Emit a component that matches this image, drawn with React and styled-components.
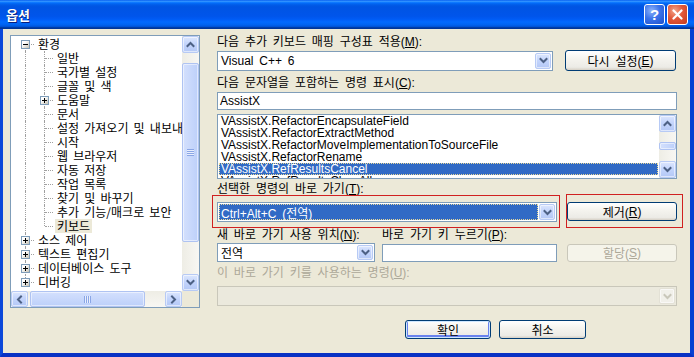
import React from 'react'
import styled, { createGlobalStyle } from 'styled-components'

const GlobalStyle = createGlobalStyle`
  html, body { margin:0; padding:0; background:#fff; }
  body { font-family:"Liberation Sans","Noto Sans CJK KR",sans-serif; font-size:12px; color:#000; word-spacing:2.5px; }
`

const Window = styled.div`
  width:694px;
  height:357px;
  display:flex;
  flex-direction:column;
  overflow:hidden;
`
const TitleBar = styled.div`
  height:29px;
  flex:none;
  box-sizing:border-box;
  display:flex;
  align-items:center;
  justify-content:space-between;
  padding:0 6px 0 6px;
  background:linear-gradient(to bottom,#0058EE 0%,#3593FF 4%,#288EFF 6%,#127DFF 8%,#036FFC 10%,#0262EE 14%,#0057E5 20%,#0054E3 24%,#0055EB 56%,#005BF5 66%,#026AFE 76%,#0062EF 86%,#0052D6 92%,#0040AB 94%,#003092 100%);
`
const Title = styled.div`
  color:#fff;
  font-family:"Noto Sans CJK KR",sans-serif;
  font-weight:bold;
  font-size:13px;
  text-shadow:1px 1px 0 #0A1E7C;
`
const CapButtons = styled.div`
  display:flex;
  gap:2px;
  margin-top:-1px;
`
const CapButton = styled.div`
  width:21px;
  height:21px;
  box-sizing:border-box;
  border:1px solid #fff;
  border-radius:3px;
  display:flex;
  align-items:center;
  justify-content:center;
  color:#fff;
  font:bold 15px "Liberation Sans",sans-serif;
  background:${p => p.$close
    ? 'radial-gradient(circle at 35% 30%, #F2A58A 0%, #E2583A 45%, #C23A1C 100%)'
    : 'radial-gradient(circle at 35% 30%, #8DB3FA 0%, #3B73EA 45%, #1C50CC 100%)'};
`

const Frame = styled.div`
  flex:1;
  display:flex;
  flex-direction:column;
  background:#ECE9D8;
  border-style:solid;
  border-color:#0B48DA #0840D2 #0831C4 #0B48DA;
  border-width:0 4px 4px 3px;
  padding:6px 0 0 7px;
`
const Main = styled.div`
  display:flex;
  align-items:flex-start;
`

/* ---------- scrollbars ---------- */
const ScrollV = styled.div`
  display:flex;
  flex-direction:column;
  width:17px;
  background:linear-gradient(90deg,#EEEDE5,#F8F7F3);
`
const ScrollH = styled.div`
  display:flex;
  height:16px;
  background:linear-gradient(180deg,#EEEDE5,#F8F7F3);
`
const Track = styled.div`
  flex:1;
  display:flex;
  flex-direction:${p => p.$h ? 'row' : 'column'};
`
const ArrowBtn = styled.div`
  flex:none;
  width:17px;
  height:${p => p.$h ? 16 : 17}px;
  box-sizing:border-box;
  border:1px solid #B7CAF5;
  border-radius:2px;
  background:linear-gradient(180deg,#DCE6FD 0%,#C4D5FC 45%,#B4C8F6 100%);
  box-shadow:inset 0 0 0 1px rgba(255,255,255,.55);
  display:flex;
  align-items:center;
  justify-content:center;
`
const Thumb = styled.div`
  flex:none;
  box-sizing:border-box;
  border:1px solid #AFC3F2;
  border-radius:2px;
  background:${p => p.$h
    ? 'linear-gradient(180deg,#D4E0FD,#BDD0FA)'
    : 'linear-gradient(90deg,#D4E0FD,#BDD0FA)'};
  box-shadow:inset 0 0 0 1px rgba(255,255,255,.5);
  display:flex;
  align-items:center;
  justify-content:center;
`
const Grip = styled.div`
  width:7px;
  height:7px;
  background:${p => p.$h
    ? 'repeating-linear-gradient(90deg,#8AA6E6 0 1px,#E8EEFD 1px 2px)'
    : 'repeating-linear-gradient(180deg,#8AA6E6 0 1px,#E8EEFD 1px 2px)'};
`

const Chevron = ({ dir, color = '#4D6185' }) => {
  const pts = {
    up: '1.5,6 4.5,3 7.5,6',
    down: '1.5,3 4.5,6 7.5,3',
    left: '6,1.5 3,4.5 6,7.5',
    right: '3,1.5 6,4.5 3,7.5',
  }[dir]
  return (
    <svg width="9" height="9" viewBox="0 0 9 9">
      <polyline points={pts} fill="none" stroke={color} strokeWidth="2" strokeLinecap="square" />
    </svg>
  )
}

const VScrollbar = ({ before, size }) => (
  <ScrollV>
    <ArrowBtn><Chevron dir="up" /></ArrowBtn>
    <Track>
      <Thumb style={{ marginTop: before, height: size }}>{size > 20 && <Grip />}</Thumb>
    </Track>
    <ArrowBtn><Chevron dir="down" /></ArrowBtn>
  </ScrollV>
)

/* ---------- tree ---------- */
const Tree = styled.div`
  width:190px;
  height:273px;
  box-sizing:border-box;
  border:1px solid #7F9DB9;
  background:#fff;
  display:grid;
  grid-template-columns:1fr 17px;
  grid-template-rows:1fr 16px;
`
const TreeItems = styled.div`
  overflow:hidden;
  padding:1px 0 0 5px;
`
const TreeRow = styled.div`
  display:flex;
  height:14px;
  white-space:nowrap;
`
const Cell = styled.span`
  position:relative;
  width:19px;
  height:14px;
  flex:none;
  &::before{
    content:'';
    display:${p => (p.$up || p.$down) ? 'block' : 'none'};
    position:absolute;
    left:9px;
    top:${p => p.$up ? 0 : 7}px;
    bottom:${p => p.$down ? 0 : 7}px;
    border-left:1px dotted #A0A0A0;
  }
  &::after{
    content:'';
    display:${p => p.$right ? 'block' : 'none'};
    position:absolute;
    left:10px;
    right:1px;
    top:7px;
    border-top:1px dotted #A0A0A0;
  }
`
const Expander = styled.span`
  position:absolute;
  z-index:1;
  left:5px;
  top:3px;
  width:9px;
  height:9px;
  box-sizing:border-box;
  border:1px solid #7F9DB9;
  background:linear-gradient(135deg,#fff 30%,#C6C2B4);
  &::before{
    content:'';
    position:absolute;
    left:1px; top:3px; width:5px; height:1px;
    background:#000;
  }
  &::after{
    content:'';
    display:${p => p.$plus ? 'block' : 'none'};
    position:absolute;
    left:3px; top:1px; width:1px; height:5px;
    background:#000;
  }
`
const TreeLabel = styled.span`
  font-family:"Noto Sans CJK KR",sans-serif;
  font-size:12px;
  line-height:14px;
  padding:0 2px;
  margin-left:1px;
  background:${p => p.$sel ? '#ECE9D8' : 'transparent'};
`
const Corner = styled.div`
  background:#ECE9D8;
`

const treeData = [
  { label: '환경', level: 0, exp: '-', first: true },
  { label: '일반', level: 1 },
  { label: '국가별 설정', level: 1 },
  { label: '글꼴 및 색', level: 1 },
  { label: '도움말', level: 1, exp: '+' },
  { label: '문서', level: 1 },
  { label: '설정 가져오기 및 내보내기', level: 1 },
  { label: '시작', level: 1 },
  { label: '웹 브라우저', level: 1 },
  { label: '자동 저장', level: 1 },
  { label: '작업 목록', level: 1 },
  { label: '찾기 및 바꾸기', level: 1 },
  { label: '추가 기능/매크로 보안', level: 1 },
  { label: '키보드', level: 1, last: true, sel: true },
  { label: '소스 제어', level: 0, exp: '+' },
  { label: '텍스트 편집기', level: 0, exp: '+' },
  { label: '데이터베이스 도구', level: 0, exp: '+' },
  { label: '디버깅', level: 0, exp: '+', last: true },
]

/* ---------- right pane controls ---------- */
const Right = styled.div`
  width:465px;
  margin-left:17px;
  display:flex;
  flex-direction:column;
`
const Label = styled.div`
  height:${p => p.$h || 14}px;
  line-height:${p => p.$h || 14}px;
  margin-top:${p => p.$mt || 0}px;
  white-space:nowrap;
  color:${p => p.$disabled ? '#ACA899' : '#000'};
  width:${p => p.$w ? p.$w + 'px' : 'auto'};
  flex:none;
`
const Row = styled.div`
  display:flex;
  align-items:center;
  margin-top:${p => p.$mt || 0}px;
`
const Combo = styled.div`
  width:${p => p.$w}px;
  height:${p => p.$h || 20}px;
  box-sizing:border-box;
  border:1px solid ${p => p.$disabled ? '#C9C7BA' : '#7F9DB9'};
  background:${p => p.$disabled ? '#EBE9DD' : '#fff'};
  display:flex;
  flex:none;
  padding:1px;
`
const ComboValue = styled.div`
  flex:1;
  display:flex;
  align-items:center;
  padding:0 2px;
  margin-right:1px;
  white-space:nowrap;
  ${p => p.$sel && `
    background:#316AC5;
    color:#fff;
    outline:1px dotted #E8D898;
    outline-offset:-1px;
  `}
`
const DropBtn = styled.div`
  width:16px;
  flex:none;
  box-sizing:border-box;
  border-radius:2px;
  display:flex;
  align-items:center;
  justify-content:center;
  border:1px solid ${p => p.$disabled ? '#E3E1D6' : '#B7CAF5'};
  background:${p => p.$disabled
    ? '#F1F0EA'
    : 'linear-gradient(180deg,#DCE6FD 0%,#C4D5FC 45%,#B4C8F6 100%)'};
  box-shadow:inset 0 0 0 1px rgba(255,255,255,.55);
`
const TextBox = styled.div`
  width:${p => p.$w}px;
  height:${p => p.$h || 18}px;
  box-sizing:border-box;
  border:1px solid #7F9DB9;
  background:#fff;
  padding:0 2px;
  line-height:${p => (p.$h || 18) - 2}px;
  flex:none;
  margin-left:${p => p.$ml || 0}px;
`
const Button = styled.div`
  width:${p => p.$w}px;
  height:${p => p.$h || 20}px;
  box-sizing:border-box;
  flex:none;
  display:flex;
  align-items:center;
  justify-content:center;
  border-radius:3px;
  border:1px solid ${p => p.$disabled ? '#C9C7BA' : '#003C74'};
  color:${p => p.$disabled ? '#ACA899' : '#000'};
  background:${p => p.$disabled
    ? '#F5F4EA'
    : 'linear-gradient(180deg,#FFFFFF 0%,#F5F4EF 40%,#ECEBE6 85%,#D6D0C5 100%)'};
  box-shadow:${p => p.$default ? 'inset 0 0 0 1px #CEE7FF, inset 0 -1px 0 2px #6982EE' : 'none'};
  margin-left:${p => p.$ml || 0}px;
`
const Highlight = styled.div`
  box-sizing:border-box;
  border:1px solid #D02020;
  width:${p => p.$w}px;
  height:${p => p.$h}px;
  padding:${p => p.$pad};
  margin-top:${p => p.$mt || 0}px;
  margin-left:${p => p.$ml || 0}px;
  flex:none;
`
const HighlightRow = styled.div`
  display:flex;
  align-items:flex-start;
  margin:0 0 0 -5px;
`
const ListBox = styled.div`
  width:460px;
  height:65px;
  box-sizing:border-box;
  border:1px solid #7F9DB9;
  background:#fff;
  margin-top:4px;
  display:flex;
`
const ListItems = styled.div`
  flex:1;
  overflow:hidden;
  padding:0 1px;
  word-spacing:0;
`
const ListItem = styled.div`
  height:12px;
  line-height:12px;
  padding-left:2px;
  white-space:nowrap;
  ${p => p.$sel && `
    background:#316AC5;
    color:#fff;
    outline:1px dotted #E8D898;
    outline-offset:-1px;
  `}
`
const Footer = styled.div`
  display:flex;
  gap:8px;
  margin-top:12px;
  padding-left:395px;
`

const listItems = [
  'VAssistX.RefactorEncapsulateField',
  'VAssistX.RefactorExtractMethod',
  'VAssistX.RefactorMoveImplementationToSourceFile',
  'VAssistX.RefactorRename',
  'VAssistX.RefResultsCancel',
  'VAssistX.RefResultsClearAll',
]

export default function App() {
  return (
    <>
      <GlobalStyle />
      <Window>
        <TitleBar>
          <Title>옵션</Title>
          <CapButtons>
            <CapButton>?</CapButton>
            <CapButton $close>
              <svg width="11" height="11" viewBox="0 0 11 11">
                <path d="M1.5 1.5 L9.5 9.5 M9.5 1.5 L1.5 9.5" stroke="#fff" strokeWidth="2.2" strokeLinecap="round" />
              </svg>
            </CapButton>
          </CapButtons>
        </TitleBar>
        <Frame>
          <Main>
            <Tree>
              <TreeItems>
                {treeData.map((it, i) => (
                  <TreeRow key={i}>
                    {it.level === 0 ? (
                      <Cell $up={!it.first} $down={!it.last} $right>
                        {it.exp && <Expander $plus={it.exp === '+'} />}
                      </Cell>
                    ) : (
                      <>
                        <Cell $up $down />
                        <Cell $up $down={!it.last} $right>
                          {it.exp && <Expander $plus={it.exp === '+'} />}
                        </Cell>
                      </>
                    )}
                    <TreeLabel $sel={it.sel}>{it.label}</TreeLabel>
                  </TreeRow>
                ))}
              </TreeItems>
              <VScrollbar before={10} size={179} />
              <ScrollH>
                <ArrowBtn $h><Chevron dir="left" /></ArrowBtn>
                <Track $h>
                  <Thumb $h style={{ marginLeft: 2, width: 115 }}><Grip $h /></Thumb>
                </Track>
                <ArrowBtn $h><Chevron dir="right" /></ArrowBtn>
              </ScrollH>
              <Corner />
            </Tree>

            <Right>
              <Label>다음 추가 키보드 매핑 구성표 적용(<u>M</u>):</Label>
              <Row $mt={1}>
                <Combo $w={336}>
                  <ComboValue>Visual C++ 6</ComboValue>
                  <DropBtn><Chevron dir="down" /></DropBtn>
                </Combo>
                <Button $w={111} $h={21} $ml={12}>다시 설정(<u>E</u>)</Button>
              </Row>

              <Label $mt={5}>다음 문자열을 포함하는 명령 표시(<u>C</u>):</Label>
              <Row $mt={2}>
                <TextBox $w={460}>AssistX</TextBox>
              </Row>
              <ListBox>
                <ListItems>
                  {listItems.map((t, i) => (
                    <ListItem key={t} $sel={i === 4}>{t}</ListItem>
                  ))}
                </ListItems>
                <VScrollbar before={10} size={8} />
              </ListBox>

              <Label $mt={5} $h={11}>선택한 명령의 바로 가기(<u>T</u>):</Label>
              <HighlightRow>
                <Highlight $w={348} $h={33} $pad="6px 0 0 4px">
                  <Combo $w={340}>
                    <ComboValue $sel>Ctrl+Alt+C (전역)</ComboValue>
                    <DropBtn><Chevron dir="down" /></DropBtn>
                  </Combo>
                </Highlight>
                <Highlight $w={117} $h={34} $pad="7px 0 0 0" $mt={-1} $ml={6}>
                  <Button $w={110} $h={19}>제거(<u>R</u>)</Button>
                </Highlight>
              </HighlightRow>

              <Row>
                <Label $w={165}>새 바로 가기 사용 위치(<u>N</u>):</Label>
                <Label>바로 가기 키 누르기(<u>P</u>):</Label>
              </Row>
              <Row $mt={1}>
                <Combo $w={158} $h={19}>
                  <ComboValue>전역</ComboValue>
                  <DropBtn><Chevron dir="down" /></DropBtn>
                </Combo>
                <TextBox $w={175} $h={18} $ml={7} />
                <Button $w={110} $h={18} $ml={10} $disabled>할당(<u>S</u>)</Button>
              </Row>

              <Label $mt={4} $disabled>이 바로 가기 키를 사용하는 명령(<u>U</u>):</Label>
              <Row $mt={6}>
                <Combo $w={460} $disabled>
                  <ComboValue />
                  <DropBtn $disabled><Chevron dir="down" color="#C9C7BA" /></DropBtn>
                </Combo>
              </Row>
            </Right>
          </Main>

          <Footer>
            <Button $w={86} $h={19} $default>확인</Button>
            <Button $w={87} $h={19}>취소</Button>
          </Footer>
        </Frame>
      </Window>
    </>
  )
}
